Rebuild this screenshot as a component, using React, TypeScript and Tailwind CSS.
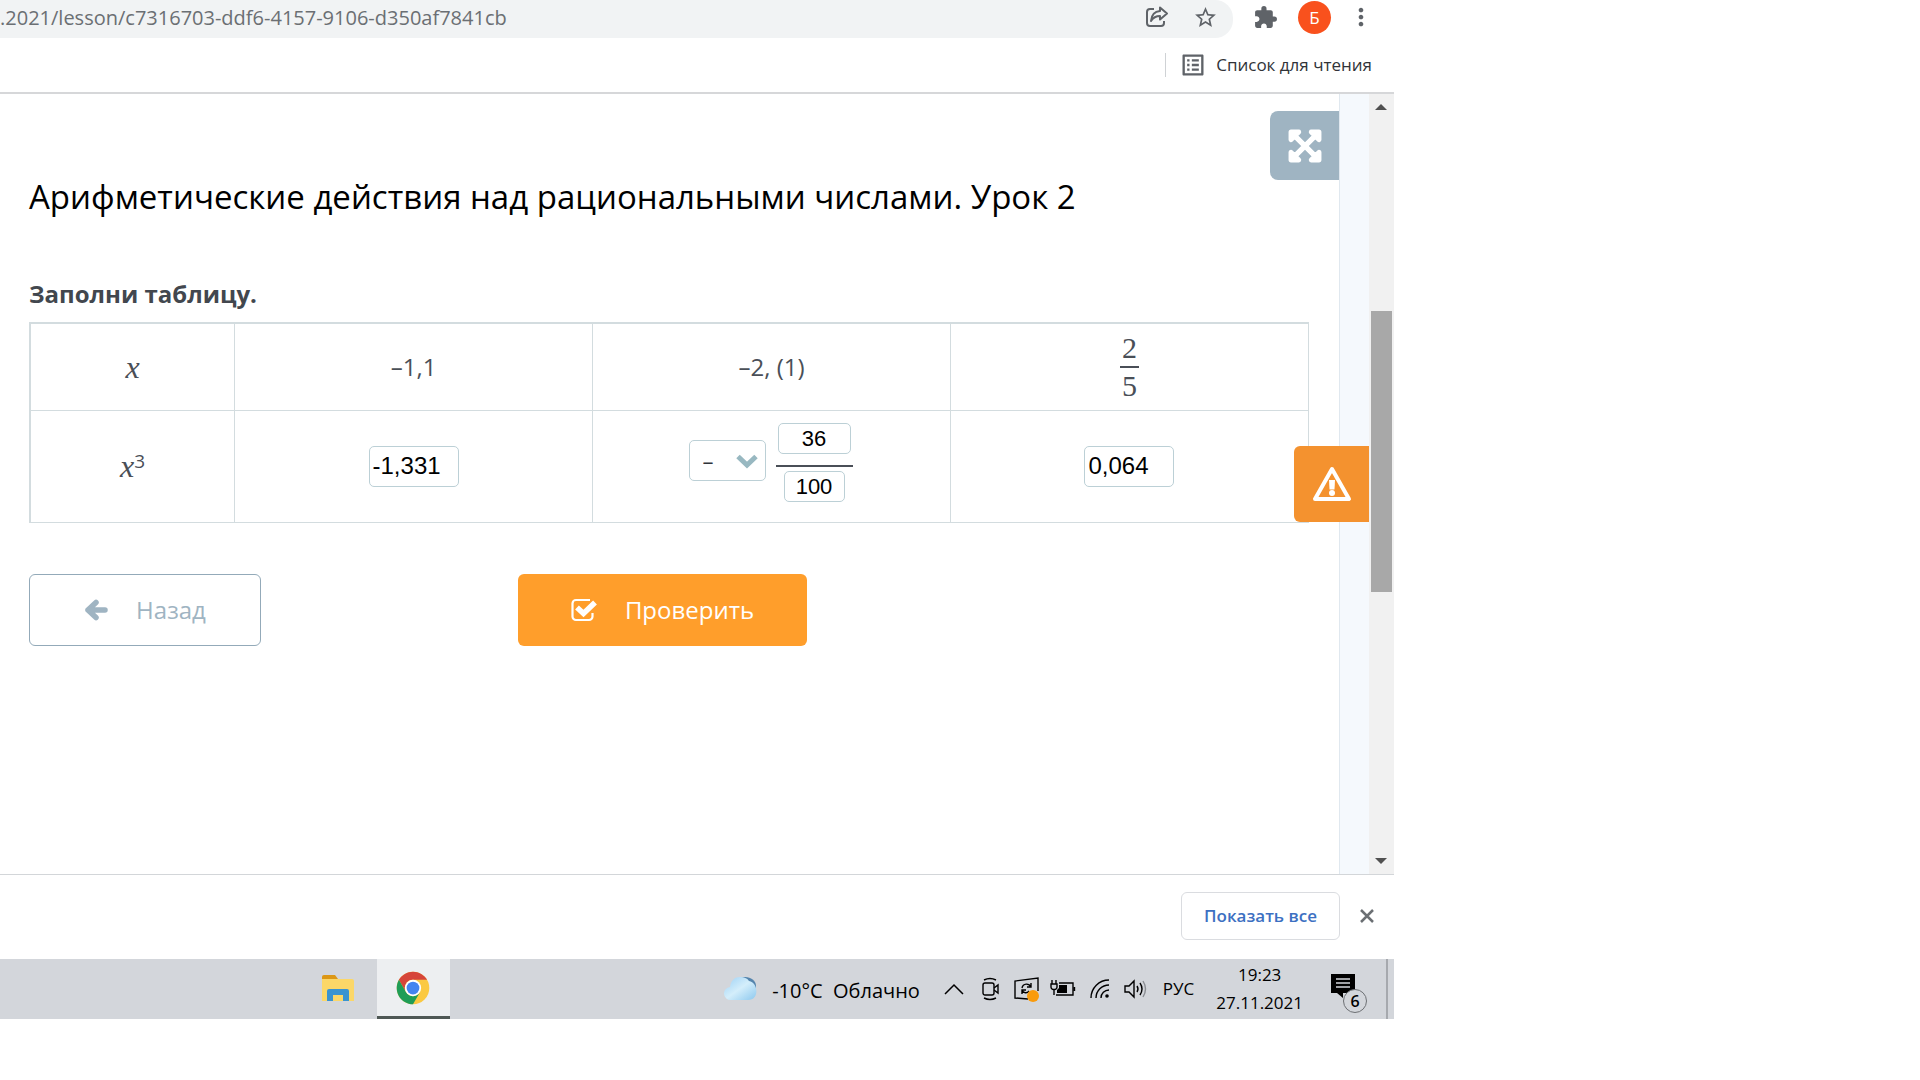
import { useState } from "react";
import { MdExtension, MdListAlt, MdMoreVert, MdStarBorder } from "react-icons/md";
import { FaExpandArrowsAlt } from "react-icons/fa";

const UI_FONT = "font-['Open_Sans','Noto_Sans',sans-serif]";
const FIELD = "rounded-[5px] border border-[#bcd0d6] bg-white font-['Liberation_Sans',Arial,sans-serif] text-black outline-none";

export default function App() {
  return (
    <div className={`min-h-screen w-full overflow-x-hidden bg-white ${UI_FONT}`}>
      <div className="w-full max-w-[1394px]">
        <AddressBar />
        <BookmarksBar />
        <div className="flex h-[780px]">
          <Lesson />
          <Scrollbar />
        </div>
        <DownloadsBar />
        <Taskbar />
      </div>
    </div>
  );
}

function AddressBar() {
  return (
    <header className="flex h-[38px] items-start text-[#5f6368]">
      <div className="flex h-[38px] min-w-0 flex-1 items-start rounded-r-[18px] bg-[#f1f3f4]">
        <input
          aria-label="Адресная строка"
          readOnly
          value=".2021/lesson/c7316703-ddf6-4157-9106-d350af7841cb"
          className="h-[34px] min-w-0 flex-1 bg-transparent text-[20px] text-[#6b6f73] outline-none"
        />
        <div className="flex h-[34px] items-center gap-6 pr-[15px]">
          <button type="button" aria-label="Поделиться">
            <svg width="24" height="24" viewBox="0 0 24 24" fill="none" stroke="currentColor" strokeWidth="2" strokeLinejoin="round">
              <path d="M9 4H5a3 3 0 0 0-3 3v11a3 3 0 0 0 3 3h11a3 3 0 0 0 3-3v-2" />
              <path d="M15 2.500l7 6-7 6v-3.500c-4 0-6.500 1-9 5 .5-6 3.500-9.500 9-10z" />
            </svg>
          </button>
          <button type="button" aria-label="Добавить в закладки"><MdStarBorder size={25} /></button>
        </div>
      </div>
      <div className="flex h-[34px] items-center gap-5 pl-5 pr-[19px]">
        <button type="button" aria-label="Расширения"><MdExtension size={25} /></button>
        <button type="button" className="h-[33px] w-[33px] rounded-full bg-[#f9511d] text-[17px] leading-[33px] text-white">Б</button>
        <button type="button" aria-label="Меню" className="-ml-1"><MdMoreVert size={28} /></button>
      </div>
    </header>
  );
}

function BookmarksBar() {
  return (
    <nav className="flex h-14 items-center justify-end border-b-2 border-[#d6d7d9] pr-[22px]">
      <span className="h-6 w-px bg-[#cfd2d5]" />
      <button type="button" className="ml-[13px] flex items-center gap-[9px] text-[17px] text-[#303338]">
        <MdListAlt size={28} color="#5f6368" />
        Список для чтения
      </button>
    </nav>
  );
}

function Lesson() {
  return (
    <div className="relative flex min-w-0 flex-1 bg-[#f5f9fd]">
      <main className="relative mr-[29px] min-w-0 flex-1 border-r border-[#e0e8ef] bg-white pl-[29px] pr-[30px] pt-[80px]">
        <button
          type="button"
          aria-label="На весь экран"
          className="absolute right-0 top-[17px] flex h-[69px] w-[69px] items-center justify-center rounded-l-lg bg-[#9fb4c2] text-white"
        >
          <FaExpandArrowsAlt size={36} stroke="white" strokeWidth={20} />
        </button>
        <h1 className="text-[33px] leading-[46px] text-black">Арифметические действия над рациональными числами. Урок 2</h1>
        <h2 className="mt-[57px] text-[24px] font-bold leading-[34px] text-[#42474e]">Заполни таблицу.</h2>
        <CubeTable />
        <div className="mt-[51px] flex gap-[257px]">
          <button type="button" className="flex h-[72px] w-[232px] items-center justify-center gap-7 rounded-md border border-[#93aab9] text-[24px] text-[#9fb4c2]">
            <svg width="24" height="22" viewBox="0 0 24 22" fill="none" stroke="currentColor" strokeWidth="5.500" strokeLinecap="round" strokeLinejoin="round">
              <path d="M4 11h17M12 3.500L4 11l8 7.500" />
            </svg>
            Назад
          </button>
          <button type="button" className="flex h-[72px] w-[289px] items-center justify-center gap-7 rounded-md bg-[#ff9e2b] text-[24px] text-white">
            <svg width="26" height="24" viewBox="0 0 26 24" fill="none" stroke="currentColor">
              <path d="M19 2H5a3.500 3.500 0 0 0-3.500 3.500v13A3.500 3.500 0 0 0 5 22h13a3.500 3.500 0 0 0 3.500-3.500V15" strokeWidth="2.200" />
              <path d="M6 9.500l6.500 6L24 4.500" strokeWidth="5.500" />
            </svg>
            Проверить
          </button>
        </div>
      </main>
      <button
        type="button"
        aria-label="Сообщить об ошибке"
        className="absolute right-0 top-[352px] flex h-[76px] w-[75px] items-center justify-center rounded-l-md bg-[#f4922f]"
      >
        <svg width="40" height="36" viewBox="0 0 40 36" fill="none" stroke="white">
          <path d="M20 3L37 33H3z" strokeWidth="4" strokeLinejoin="round" />
          <path d="M17 14h6l-.5 9.500h-5z" fill="white" stroke="none" />
          <circle cx="20" cy="27" r="3" fill="white" stroke="none" />
        </svg>
      </button>
    </div>
  );
}

function CubeTable() {
  const [sign, setSign] = useState("–");
  const cell = "border border-[#d3dcdf] p-0 text-center align-middle";

  return (
    <table className="mt-[11px] w-full table-fixed border-collapse border-l-2 border-t-2 border-[#d3dcdf] text-[24px] text-[#4a4f57]">
      <colgroup>
        <col className="w-[16%]" />
        <col className="w-[28%]" />
        <col className="w-[28%]" />
        <col className="w-[28%]" />
      </colgroup>
      <tbody>
        <tr className="h-[87px]">
          <td className={`${cell} pt-1`}><MathX /></td>
          <td className={cell}>–1,1</td>
          <td className={cell}>–2, (1)</td>
          <td className={cell}>
            <div className="inline-flex flex-col items-center font-['Liberation_Serif',serif] text-[30px] leading-[36px]">
              <span className="px-[2px]">2</span>
              <span className="h-[2px] w-[19px] bg-[#4a4f57]" />
              <span>5</span>
            </div>
          </td>
        </tr>
        <tr className="h-[112px]">
          <td className={`${cell} pt-1`}>
            <MathX />
            <sup className="text-[19px]">3</sup>
          </td>
          <td className={cell}>
            <input aria-label="Куб числа –1,1" defaultValue="-1,331" className={`${FIELD} h-[41px] w-[90px] px-[3px] text-[24px]`} />
          </td>
          <td className={cell}>
            <div className="flex items-center justify-center gap-[10px] pb-3 pr-[2px]">
              <div className="relative">
                <select
                  aria-label="Знак"
                  value={sign}
                  onChange={(e) => setSign(e.target.value)}
                  className="h-[41px] w-[77px] appearance-none rounded-[5px] border border-[#bcd0d6] bg-white pl-[13px] text-[22px] text-[#30343a] outline-none"
                >
                  <option>–</option>
                  <option>+</option>
                </select>
                <svg className="pointer-events-none absolute right-2 top-[14px]" width="22" height="15" viewBox="0 0 22 15" fill="none" stroke="#98b8c1" strokeWidth="5">
                  <path d="M2 2.500l9 8.500 9-8.500" />
                </svg>
              </div>
              <div className="flex flex-col items-center pt-1">
                <input aria-label="Числитель" defaultValue="36" className={`${FIELD} h-[31px] w-[73px] text-center text-[22px]`} />
                <span className="mb-1 mt-[11px] h-[2px] w-[77px] bg-[#4a4f57]" />
                <input aria-label="Знаменатель" defaultValue="100" className={`${FIELD} h-[31px] w-[61px] text-center text-[22px]`} />
              </div>
            </div>
          </td>
          <td className={cell}>
            <input aria-label="Куб числа 2/5" defaultValue="0,064" className={`${FIELD} h-[41px] w-[90px] px-[3px] text-[24px]`} />
          </td>
        </tr>
      </tbody>
    </table>
  );
}

function MathX() {
  return <i className="font-['Liberation_Serif',serif] text-[32px] leading-none">x</i>;
}

function Scrollbar() {
  return (
    <div className="flex w-[25px] flex-none flex-col items-center bg-[#f1f1f1] pr-px">
      <button type="button" aria-label="Вверх" className="flex h-[26px] items-center">
        <svg width="12" height="6" viewBox="0 0 12 6"><path d="M6 0l6 6H0z" fill="#505050" /></svg>
      </button>
      <div className="mt-[191px] h-[281px] w-[21px] bg-[#a8a8a8]" />
      <button type="button" aria-label="Вниз" className="mt-auto flex h-[26px] items-center">
        <svg width="12" height="6" viewBox="0 0 12 6"><path d="M0 0h12L6 6z" fill="#505050" /></svg>
      </button>
    </div>
  );
}

function DownloadsBar() {
  return (
    <div className="flex h-[85px] items-center justify-end gap-5 border-t border-[#d3d6d9] pb-[2px] pr-5">
      <button type="button" className="h-12 w-[159px] rounded-md border border-[#dadce0] text-[17px] font-semibold text-[#3c70c2]">Показать все</button>
      <button type="button" aria-label="Закрыть">
        <svg width="14" height="14" viewBox="0 0 14 14" stroke="#6b6f73" strokeWidth="2.500">
          <path d="M1 1l12 12M13 1L1 13" />
        </svg>
      </button>
    </div>
  );
}

function Taskbar() {
  return (
    <footer className="flex h-[60px] items-center bg-[#d3d6db] text-black">
      <div className="flex h-full flex-1 items-center pl-[321px]">
        <button type="button" aria-label="Проводник">
          <svg width="34" height="30" viewBox="0 0 34 30">
            <path d="M1 3a2 2 0 0 1 2-2h11l3 4H1z" fill="#dc9715" />
            <path d="M1 5h30a2 2 0 0 1 2 2v20H1z" fill="#fbd768" />
            <path d="M6 27V17a2 2 0 0 1 2-2h18a2 2 0 0 1 2 2v10h-6v-6H12v6z" fill="#3a94d0" />
          </svg>
        </button>
        <button type="button" aria-label="Chrome" className="ml-[22px] flex h-full w-[73px] items-center justify-center border-b-[3px] border-[#4f5855] bg-[#edeff1] pr-[2px]">
          <svg width="34" height="34" viewBox="0 0 48 48">
            <circle cx="24" cy="24" r="23" fill="#fbc941" />
            <path d="M4.100 12.500A23 23 0 0 1 43.900 12.500H24A11.500 11.500 0 0 0 14 29.750z" fill="#d6453a" />
            <path d="M4.100 12.500A23 23 0 0 0 24 47L34 29.750A11.500 11.500 0 0 1 14 29.750z" fill="#1f9d57" />
            <circle cx="24" cy="24" r="11.500" fill="white" />
            <circle cx="24" cy="24" r="9" fill="#4484f0" />
          </svg>
        </button>
      </div>
      <div className="flex items-center gap-[14px] text-[20px]">
        <CloudIcon />
        <span className="whitespace-pre pt-1">-10°C  Облачно</span>
      </div>
      <TrayIcons />
      <span className="ml-4 text-[17px]">РУС</span>
      <div className="ml-[22px] text-center text-[17px] leading-[28px]">
        <div>19:23</div>
        <div>27.11.2021</div>
      </div>
      <button type="button" aria-label="Уведомления" className="relative ml-7 h-[36px] w-[36px]">
        <svg width="26" height="26" viewBox="0 0 26 26" className="mb-1">
          <path d="M0 0h24v19H12v5l-6-5H0z" />
          <path d="M5 5h14M5 9h14M5 13h14" stroke="#d3d6db" strokeWidth="1.300" />
        </svg>
        <span className="absolute -bottom-[6px] right-0 h-6 w-6 rounded-full border border-[#6d7074] bg-[#d3d6db] text-center text-[16px] font-semibold leading-[22px]">6</span>
      </button>
      <div className="ml-[19px] mr-[6px] h-full w-[2px] bg-[#a6a9ae]" />
    </footer>
  );
}

function CloudIcon() {
  return (
    <svg width="34" height="26" viewBox="0 0 34 26">
      <defs>
        <linearGradient id="cloud" x1="0" y1="0" x2="1" y2="1">
          <stop offset="0" stopColor="#9bd0f5" />
          <stop offset=".5" stopColor="#d4eefb" />
          <stop offset="1" stopColor="#8cc8ee" />
        </linearGradient>
      </defs>
      <path d="M17 2C23-1 32 3 32 10c0 3-1 4-2 5z" fill="#5585ad" />
      <path d="M7 24a6.500 6.500 0 0 1-1-13C7 4 11 1 16 1c4 0 7 1 9 4 9 1 11 19-1 19z" fill="url(#cloud)" />
    </svg>
  );
}

function TrayIcons() {
  return (
    <div className="ml-6 flex items-center gap-[14px]">
      <svg width="20" height="12" viewBox="0 0 20 12" fill="none" stroke="black" strokeWidth="1.500">
        <path d="M1 11l9-9 9 9" />
      </svg>
      <svg className="ml-1" width="18" height="24" viewBox="0 0 18 24" fill="none" stroke="black" strokeWidth="1.400">
        <rect x="1" y="6" width="11" height="12" rx="2" />
        <path d="M12 11l4-3v8l-4-3M2 3q6-3 12 0M2 21q6 3 12 0" />
      </svg>
      <svg width="26" height="26" viewBox="0 0 26 26" fill="none" stroke="black" strokeWidth="1.400">
        <path d="M24 15V2L1 5v17l13 1" />
        <path d="M8 12c1-5 7-5 9-1m0-4v4h-4M15 15c-2 3-6 2-7-1m0 4v-4h4" />
        <circle cx="19" cy="20" r="6" fill="#f99b0c" stroke="none" />
      </svg>
      <svg className="-ml-1" width="26" height="20" viewBox="0 0 26 20" fill="none" stroke="black" strokeWidth="1.400">
        <path d="M9 4h14v12H6M24.500 8v4M2 1v4M6 1v4M1 5h6v3a2.500 2.500 0 0 1-2.500 2.500h-1A2.500 2.500 0 0 1 1 8zM4 10.500V16" />
        <path d="M9 6h8v8H7v-3l2-2z" fill="black" stroke="none" />
      </svg>
      <svg width="20" height="20" viewBox="0 0 20 20" fill="none" stroke="black" strokeWidth="1.400">
        <path d="M1 19A18 18 0 0 1 19 1M6 19A13 13 0 0 1 19 6M11 19a8 8 0 0 1 8-8" />
        <circle cx="17" cy="17" r="1.800" fill="black" stroke="none" />
      </svg>
      <svg width="23" height="20" viewBox="0 0 23 20" fill="none" stroke="black" strokeWidth="1.400">
        <path d="M1 7h4l5-5v16l-5-5H1zM13 7q2 3 0 6M16 4q4 6 0 12" />
        <path d="M19 2q5 8 0 16" stroke="#8a8d92" />
      </svg>
    </div>
  );
}
